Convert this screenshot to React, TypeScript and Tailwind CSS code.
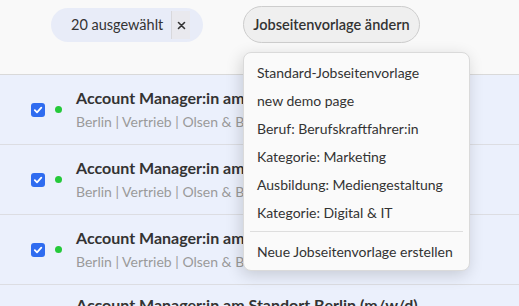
import React from "react";

const rows = [0, 1, 2];

function Row({ checked = true }: { checked?: boolean }) {
  return (
    <div className="h-[70px] border-b border-[#dcdde2] bg-[#ebf0fc] flex items-center">
      <div className="w-[31px]" />
      <div className="w-[14px] h-[14px] rounded-[3px] bg-[#2f6cf0] flex items-center justify-center">
        {checked && (
          <svg width="10" height="10" viewBox="0 0 10 10">
            <path d="M1.8 5.2 L4 7.3 L8.3 2.6" stroke="white" strokeWidth="1.8" fill="none" strokeLinecap="round" strokeLinejoin="round" />
          </svg>
        )}
      </div>
      <div className="ml-[10px] w-[7px] h-[7px] rounded-full bg-[#25c93a]" />
      <div className="ml-[14px] flex flex-col whitespace-nowrap">
        <div className="text-[16px] font-bold text-[#333] leading-[20px]">Account Manager:in am Standort Berlin (m/w/d)</div>
        <div className="text-[14px] text-[#9a9a9a] leading-[18px] mt-[5px]">Berlin | Vertrieb | Olsen &amp; Blum GmbH</div>
      </div>
    </div>
  );
}

const items = [
  "Standard-Jobseitenvorlage",
  "new demo page",
  "Beruf: Berufskraftfahrer:in",
  "Kategorie: Marketing",
  "Ausbildung: Mediengestaltung",
  "Kategorie: Digital & IT",
];

export default function App() {
  return (
    <div className="relative w-[519px] h-[306px] overflow-hidden bg-[#ebf0fc]" style={{ fontFamily: 'Lato, "Noto Sans", sans-serif' }}>
      <div className="h-[75px] bg-[#f9f9f9] border-b border-[#d9d9d9] flex items-start">
        <div className="ml-[51px] mt-[8px] h-[34px] w-[152px] rounded-full bg-[#e8ecf8] flex items-center overflow-hidden">
          <span className="pl-[20px] pr-[8px] text-[14.5px] text-[#333] whitespace-nowrap">20 ausgewählt</span>
          <div className="ml-auto h-[28px] w-[24px] border-l border-[#d8d8dc] bg-[#e9e9ee] flex items-center justify-center">
            <svg width="9" height="9" viewBox="0 0 9 9">
              <path d="M1.5 1.5 L7.5 7.5 M7.5 1.5 L1.5 7.5" stroke="#333" strokeWidth="1.6" strokeLinecap="round" />
            </svg>
          </div>
          <div className="w-[13px] shrink-0" />
        </div>
        <button className="ml-[40px] mt-[6px] h-[37px] w-[177px] rounded-full border border-[#cdcdcd] bg-[#efefef] text-[14.5px] font-semibold text-[#333] flex items-center justify-center">
          Jobseitenvorlage ändern
        </button>
      </div>
      {rows.map((r) => (
        <Row key={r} />
      ))}
      <div className="h-[70px] bg-[#ebf0fc] flex items-start">
        <div className="ml-[76px] mt-[10px] text-[16px] font-bold text-[#333] leading-[20px] whitespace-nowrap">Account Manager:in am Standort Berlin (m/w/d)</div>
      </div>

      <div className="absolute z-10 left-[243px] top-[52px] w-[227px] rounded-[8px] border border-[#dadada] bg-[#fafafa] shadow-[-2px_4px_16px_rgba(0,0,0,0.16)] py-[5px]">
        {items.map((t) => (
          <div key={t} className="h-[28px] flex items-center pl-[13px] text-[14px] text-[#333] whitespace-nowrap">{t}</div>
        ))}
        <div className="mx-[6px] my-[5px] h-px bg-[#dedede]" />
        <div className="h-[28px] flex items-center pl-[13px] text-[14px] text-[#333] whitespace-nowrap">Neue Jobseitenvorlage erstellen</div>
      </div>
    </div>
  );
}
